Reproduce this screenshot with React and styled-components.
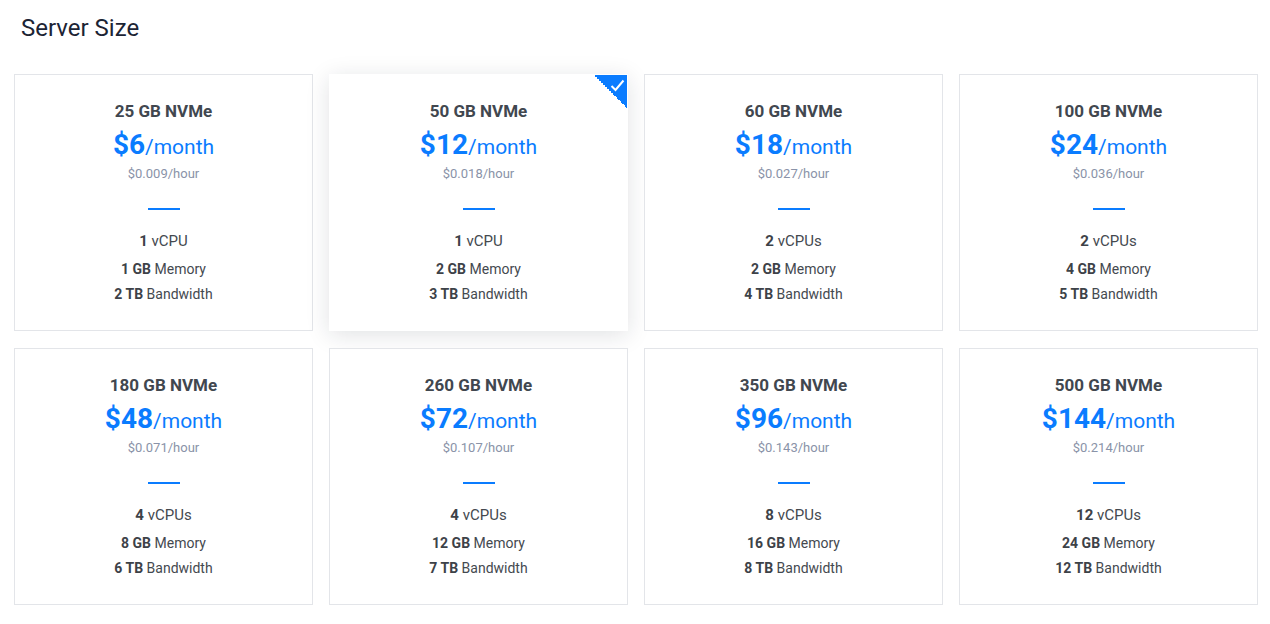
import React, { useState } from 'react';
import styled, { createGlobalStyle } from 'styled-components';

const GlobalStyle = createGlobalStyle`
  body {
    margin: 0;
    background: #fff;
    font-family: Roboto, "Liberation Sans", Arial, sans-serif;
  }
`;

const Page = styled.div`
  width: 1270px;
  height: 624px;
  box-sizing: border-box;
  padding: 0 12px 0 14px;
  background: #fff;
`;

const Heading = styled.h2`
  margin: 0;
  padding: 14px 0 0 7px;
  height: 74px;
  box-sizing: border-box;
  font-size: 24px;
  line-height: 28px;
  font-weight: 400;
  color: #1c2434;
`;

const Grid = styled.div`
  display: grid;
  grid-template-columns: repeat(4, 299px);
  column-gap: 16px;
  row-gap: 17px;
`;

const Card = styled.div`
  position: relative;
  height: 257px;
  box-sizing: border-box;
  padding-top: 26px;
  display: flex;
  flex-direction: column;
  align-items: center;
  background: #fff;
  border: 1px solid ${p => (p.$active ? 'transparent' : '#e3e5e9')};
  box-shadow: ${p => (p.$active ? '0 4px 22px rgba(20, 30, 50, 0.13)' : 'none')};
  cursor: pointer;
  overflow: hidden;
`;

const Corner = styled.div`
  position: absolute;
  top: -1px;
  right: -1px;
  width: 35px;
  height: 35px;
  background: linear-gradient(45deg, transparent 50%, #0a7cff 50%);
  svg {
    position: absolute;
    top: 5px;
    right: 3px;
  }
`;

const Title = styled.div`
  font-size: 17px;
  line-height: 20px;
  font-weight: 700;
  color: #41474f;
`;

const Price = styled.div`
  margin-top: 8px;
  line-height: 32px;
  color: #0a7cff;
  font-size: 21px;
  b {
    font-size: 28px;
    font-weight: 700;
  }
`;

const Hourly = styled.div`
  margin-top: 3px;
  font-size: 13px;
  line-height: 16px;
  color: #8a93a8;
`;

const Divider = styled.div`
  margin-top: 26px;
  width: 32px;
  height: 2px;
  background: #0a7cff;
`;

const Spec = styled.div`
  margin-top: ${p => p.$gap}px;
  font-size: ${p => p.$size}px;
  line-height: ${p => p.$lh}px;
  color: #44494f;
  b {
    font-weight: 700;
    color: #3d4248;
  }
`;

const plans = [
  ['25 GB NVMe', 6, '0.009', '1', 'vCPU', '1', '2'],
  ['50 GB NVMe', 12, '0.018', '1', 'vCPU', '2', '3'],
  ['60 GB NVMe', 18, '0.027', '2', 'vCPUs', '2', '4'],
  ['100 GB NVMe', 24, '0.036', '2', 'vCPUs', '4', '5'],
  ['180 GB NVMe', 48, '0.071', '4', 'vCPUs', '8', '6'],
  ['260 GB NVMe', 72, '0.107', '4', 'vCPUs', '12', '7'],
  ['350 GB NVMe', 96, '0.143', '8', 'vCPUs', '16', '8'],
  ['500 GB NVMe', 144, '0.214', '12', 'vCPUs', '24', '12'],
];

export default function App() {
  const [selected, setSelected] = useState(1);

  return (
    <Page>
      <GlobalStyle />
      <Heading>Server Size</Heading>
      <Grid>
        {plans.map(([name, price, hour, cpu, cpuLabel, mem, bw], i) => (
          <Card key={name} $active={i === selected} onClick={() => setSelected(i)}>
            {i === selected && (
              <Corner>
                <svg width="15" height="13" viewBox="0 0 15 13">
                  <path d="M1.5 7 L5.5 11 L13.5 1.5" fill="none" stroke="#fff" strokeWidth="2" />
                </svg>
              </Corner>
            )}
            <Title>{name}</Title>
            <Price><b>${price}</b>/month</Price>
            <Hourly>${hour}/hour</Hourly>
            <Divider />
            <Spec $gap={21} $size={15} $lh={20}><b>{cpu}</b> {cpuLabel}</Spec>
            <Spec $gap={9} $size={14} $lh={18}><b>{mem} GB</b> Memory</Spec>
            <Spec $gap={7} $size={14} $lh={18}><b>{bw} TB</b> Bandwidth</Spec>
          </Card>
        ))}
      </Grid>
    </Page>
  );
}
